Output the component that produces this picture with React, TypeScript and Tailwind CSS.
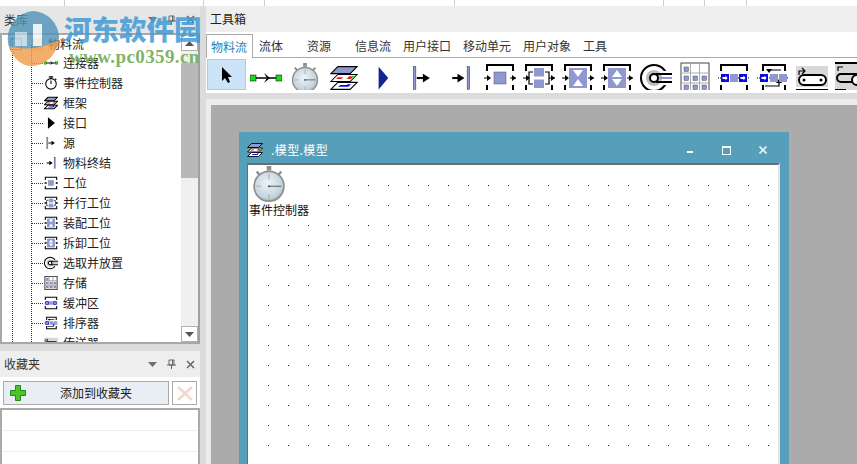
import React from "react";

const font = "font-['Noto_Sans_CJK_SC','Liberation_Sans',sans-serif]";
const LAV = "#8f98cf";

type IconProps = { s: number; sw?: number };

// shared corner frame used by the station-like blocks
const Brackets = ({ sw }: { sw: number }) => (
  <path d="M3 9V3H29V9M3 23V29H29V23" fill="none" stroke="#000" strokeWidth={sw} />
);

const Ports = ({ sw }: { sw: number }) => (
  <g>
    <path d="M0 16H6M26 16H32" stroke="#000" strokeWidth={sw} />
    <path d="M3 13l4 3-4 3zM28 13l4 3-4 3z" fill="#000" />
  </g>
);

const Svg = ({ s, children }: { s: number; children: React.ReactNode }) => (
  <svg width={s} height={s} viewBox="0 0 32 32" className="block shrink-0">
    {children}
  </svg>
);

const Connector = ({ s, sw = 1.5 }: IconProps) => (
  <Svg s={s}>
    <path d="M4 16H28" stroke="#000" strokeWidth={sw} />
    <path d="M14 11l6 5-6 5 3-5z" fill="#000" />
    <rect x="0" y="13" width="6" height="6" fill="#1bd81b" stroke="#000" strokeWidth="0.5" />
    <rect x="26" y="13" width="6" height="6" fill="#1bd81b" stroke="#000" strokeWidth="0.5" />
  </Svg>
);

const Watch = ({ s }: { s: number }) => (
  <svg width={s} height={s} viewBox="0 0 32 32" className="block shrink-0">
    <defs>
      <radialGradient id="watchFace" cx="0.45" cy="0.4" r="0.7">
        <stop offset="0" stopColor="#eef3f6" />
        <stop offset="0.75" stopColor="#c3d2dc" />
        <stop offset="1" stopColor="#8b9aa5" />
      </radialGradient>
    </defs>
    <rect x="14" y="0" width="4" height="4" fill="#8d8d8d" />
    <rect x="15" y="3" width="2" height="3" fill="#a8a8a8" />
    <path d="M5 5l3 3M27 5l-3 3" stroke="#8a8a8a" strokeWidth="2" />
    <circle cx="16" cy="18" r="14" fill="#8f8f8f" />
    <circle cx="16" cy="18" r="12.5" fill="url(#watchFace)" />
    <path d="M16 18H27" stroke="#5d6b78" strokeWidth="1" />
    <path d="M16 7v5M16 25v4M5 18h4" stroke="#9fb0bd" strokeWidth="1" />
    <circle cx="16" cy="18" r="1" fill="#4d5a66" />
  </svg>
);

const SmallWatch = ({ s }: IconProps) => (
  <Svg s={s}>
    <circle cx="16" cy="18" r="12" fill="#fff" stroke="#000" strokeWidth="2.4" />
    <path d="M11 2H21M16 2V6M16 18V10" stroke="#000" strokeWidth="2.4" fill="none" />
    <path d="M25 6l3 3" stroke="#000" strokeWidth="2.4" />
  </Svg>
);

const Frame = ({ s, sw = 1.2 }: IconProps) => (
  <Svg s={s}>
    <path d="M9 3H31L23 11H1Z" fill={LAV} stroke="#000" strokeWidth={sw} />
    <path d="M9 12H31L23 20H1Z" fill="#fff" stroke="#000" strokeWidth={sw} />
    <path d="M7 17h6l2-2H9zM19 17h5l3-3h-5z" fill="#e01818" />
    <path d="M25 13.5h4l-1 1.5h-4z" fill="#1bd81b" />
    <path d="M9 21H31L23 29H1Z" fill="#fff" stroke="#000" strokeWidth={sw} />
    <path d="M9 26h12l3-3h-4l-1 1h-7z" fill="#0a0adf" />
  </Svg>
);

const Interface = ({ s }: IconProps) => (
  <Svg s={s}>
    <path d="M11 3L22 16L11 29Z" fill="#12268f" />
  </Svg>
);

const SmallInterface = ({ s }: IconProps) => (
  <Svg s={s}>
    <path d="M9 3L25 16L9 29Z" fill="#000" />
  </Svg>
);

const Source = ({ s }: IconProps) => (
  <Svg s={s}>
    <rect x="6" y="3" width="3" height="26" fill={LAV} stroke="#222" strokeWidth="0.5" />
    <path d="M10 16H17" stroke="#000" strokeWidth="2.4" />
    <path d="M17 11l8 5-8 5z" fill="#000" />
  </Svg>
);

const Drain = ({ s }: IconProps) => (
  <Svg s={s}>
    <rect x="23" y="3" width="3" height="26" fill={LAV} stroke="#222" strokeWidth="0.5" />
    <path d="M6 16H13" stroke="#000" strokeWidth="2.4" />
    <path d="M12 11l8 5-8 5z" fill="#000" />
  </Svg>
);

const Station = ({ s, sw = 2 }: IconProps) => (
  <Svg s={s}>
    <Brackets sw={sw} />
    <Ports sw={sw * 0.6} />
    <rect x="10" y="10" width="12" height="12" fill={LAV} stroke="#555" strokeWidth="0.5" />
  </Svg>
);

const Parallel = ({ s, sw = 2 }: IconProps) => (
  <Svg s={s}>
    <Brackets sw={sw} />
    <Ports sw={sw * 0.6} />
    <path d="M6 16V10H10M6 16V22H10M26 16V10H22M26 16V22H22" fill="none" stroke="#000" strokeWidth={sw * 0.6} />
    <rect x="11" y="6" width="10" height="8.500" fill={LAV} />
    <rect x="11" y="17.500" width="10" height="8.500" fill={LAV} />
  </Svg>
);

const Assembly = ({ s, sw = 2 }: IconProps) => (
  <Svg s={s}>
    <Brackets sw={sw} />
    <Ports sw={sw * 0.6} />
    <rect x="7" y="6" width="18" height="20" fill={LAV} />
    <path d="M11 8H21L16 15ZM11 24H21L16 17Z" fill="#fff" />
  </Svg>
);

const Dismantle = ({ s, sw = 2 }: IconProps) => (
  <Svg s={s}>
    <Brackets sw={sw} />
    <Ports sw={sw * 0.6} />
    <rect x="7" y="6" width="18" height="20" fill={LAV} />
    <path d="M16 8L21 15H11ZM16 24L21 17H11Z" fill="#fff" />
  </Svg>
);

const PickPlace = ({ s, sw = 2 }: IconProps) => (
  <Svg s={s}>
    <circle cx="14" cy="16" r="13" fill="none" stroke="#000" strokeWidth={sw} />
    <rect x="16" y="9" width="16" height="14" fill="#fff" />
    <circle cx="14" cy="16" r="8" fill="#bdbdbd" />
    <circle cx="14" cy="16" r="4" fill="#fff" stroke="#000" strokeWidth={sw} />
    <path d="M16 12H32M16 20H32" stroke="#000" strokeWidth={sw} />
    <path d="M20 15H32V17H20Z" fill={LAV} />
  </Svg>
);

const Store = ({ s, sw = 1 }: IconProps) => (
  <Svg s={s}>
    <rect x="2" y="1" width="28" height="30" fill="#fff" stroke="#444" strokeWidth={sw} />
    <path d="M11.5 1V31M20.5 1V31M2 11H30M2 21H30" stroke="#aaa" strokeWidth={sw} />
    {[5, 14, 23].map((y) =>
      [5, 14, 23].map((x) =>
        x === 14 && y === 5 ? null : x === 23 && y === 5 ? null : (
          <rect key={`${x}-${y}`} x={x} y={y} width="4.5" height="4.5" fill={LAV} stroke="#334" strokeWidth="0.4" />
        ),
      ),
    )}
  </Svg>
);

const Buffer = ({ s, sw = 2 }: IconProps) => (
  <Svg s={s}>
    <Brackets sw={sw} />
    <path d="M0 16H32" stroke="#000" strokeWidth="1" strokeDasharray="1 1" />
    <rect x="3" y="12" width="8" height="8" fill="#0a0adf" />
    <rect x="12" y="12" width="8" height="8" fill={LAV} />
    <rect x="21" y="12" width="8" height="8" fill="#0a0adf" />
    <path d="M4.5 15h3v-1.5l2 2.500-2 2.500V17h-3zM22.500 15h3v-1.500l2 2.500-2 2.500V17h-3z" fill="#fff" />
  </Svg>
);

const Sorter = ({ s, sw = 2 }: IconProps) => (
  <Svg s={s}>
    <path d="M6 9V3H28V9M6 23V29H28V23" fill="none" stroke="#000" strokeWidth={sw} />
    <path d="M24 8H11M8 24H22V20" fill="none" stroke="#000" strokeWidth={sw * 0.6} />
    <path d="M9 7h6l-3 4zM19 21h6l-3-4z" fill="#000" />
    <path d="M0 16H32" stroke="#000" strokeWidth="1" strokeDasharray="1 1" />
    <rect x="3" y="12" width="8" height="8" fill="#0a0adf" />
    <rect x="13" y="12" width="8" height="8" fill={LAV} />
    <rect x="22" y="12" width="8" height="8" fill={LAV} />
    <path d="M4.500 15h3v-1.500l2 2.500-2 2.500V17h-3z" fill="#fff" />
  </Svg>
);

const Conveyor = ({ s, sw = 2 }: IconProps) => (
  <Svg s={s}>
    <rect x="0" y="4" width="32" height="21" fill="#d8d8d8" />
    <rect x="3" y="13" width="27" height="10" rx="5" fill="#fff" stroke="#000" strokeWidth={sw} />
    <circle cx="8" cy="18" r="1.500" fill="#000" />
    <circle cx="25" cy="18" r="1.500" fill="#000" />
    <path d="M3 13V9H8M6 6l3 3-3 3" fill="none" stroke="#000" strokeWidth={sw * 0.6} />
    <path d="M0 28H32" stroke="#000" strokeWidth={sw} />
  </Svg>
);

const Track = ({ s, sw = 2 }: IconProps) => (
  <Svg s={s}>
    <rect x="0" y="0" width="32" height="32" fill="#d8d8d8" />
    <path d="M0 1H32" stroke="#000" strokeWidth={sw} />
    <path d="M6 12H28M6 20H18" fill="none" stroke="#000" strokeWidth={sw} />
    <path d="M6 12a4 4 0 0 0 0 8" fill="none" stroke="#000" strokeWidth={sw} />
    <circle cx="22" cy="18" r="5" fill="#fff" stroke="#000" strokeWidth={sw} />
    <path d="M3 9V5H8" fill="none" stroke="#000" strokeWidth={sw * 0.6} />
    <path d="M0 28H10V32" fill="none" stroke="#000" strokeWidth={sw} />
  </Svg>
);

const treeRows: { label: string; Icon: React.ComponentType<IconProps> }[] = [
  { label: "连接器", Icon: Connector },
  { label: "事件控制器", Icon: SmallWatch },
  { label: "框架", Icon: Frame },
  { label: "接口", Icon: SmallInterface },
  { label: "源", Icon: Source },
  { label: "物料终结", Icon: Drain },
  { label: "工位", Icon: Station },
  { label: "并行工位", Icon: Parallel },
  { label: "装配工位", Icon: Assembly },
  { label: "拆卸工位", Icon: Dismantle },
  { label: "选取并放置", Icon: PickPlace },
  { label: "存储", Icon: Store },
  { label: "缓冲区", Icon: Buffer },
  { label: "排序器", Icon: Sorter },
  { label: "传送器", Icon: Conveyor },
];

const tabs = [
  { label: "物料流", w: "w-[47px] pl-[4px]" },
  { label: "流体", w: "w-[48px] pl-[6px]" },
  { label: "资源", w: "w-[48px] pl-[6px]" },
  { label: "信息流", w: "w-[48px] pl-[6px]" },
  { label: "用户接口", w: "w-[60px] pl-[6px]" },
  { label: "移动单元", w: "w-[60px] pl-[6px]" },
  { label: "用户对象", w: "w-[60px] pl-[6px]" },
  { label: "工具", w: "w-[36px] pl-[6px]" },
];

const toolIcons: React.ReactNode[] = [
  <Connector s={32} />,
  <Watch s={30} />,
  <Frame s={28} />,
  <Interface s={28} />,
  <Source s={28} />,
  <Drain s={28} />,
  <Station s={32} />,
  <Parallel s={32} />,
  <Assembly s={32} />,
  <Dismantle s={32} />,
  <PickPlace s={32} />,
  <Store s={32} />,
  <Buffer s={32} />,
  <Sorter s={32} />,
  <Conveyor s={32} />,
  <Track s={32} />,
];

const ticks = ["w-[65px]", "w-[139px]", "w-[61px]", "w-[190px]", "w-[209px]", "w-[41px]", "w-[42px]"];

const PanelControls = () => (
  <div className="ml-auto flex items-center gap-[10px] pr-[5px]">
    <svg width="9" height="5" viewBox="0 0 9 5">
      <path d="M0 0H9L4.500 5Z" fill="#6e6e6e" />
    </svg>
    <svg width="9" height="10" viewBox="0 0 9 10">
      <path d="M2 1H7V6H2ZM0 6H9M4.500 6V10M5.500 1V6" fill="none" stroke="#666" />
    </svg>
    <svg width="9" height="9" viewBox="0 0 9 9">
      <path d="M1 1L8 8M8 1L1 8" stroke="#666" strokeWidth="1.500" />
    </svg>
  </div>
);

const ScrollArrow = ({ down }: { down?: boolean }) => (
  <div className="flex h-[16px] w-[17px] shrink-0 items-center justify-center border border-[#b0b0b0] bg-white">
    <svg width="9" height="5" viewBox="0 0 9 5">
      <path d={down ? "M0 0H9L4.500 5Z" : "M0 5H9L4.500 0Z"} fill="#555" />
    </svg>
  </div>
);

const TreePanel = () => (
  <div className="relative h-[311px] overflow-hidden border-2 border-[#a8a8a8] border-r-[#a0a0a0] bg-white">
    <div className="flex h-full">
      <div className="relative min-w-0 flex-1 overflow-hidden">
        {/* dotted connector lines */}
        <div className="absolute left-[10px] top-[4px] h-full border-l border-dotted border-[#333]" />
        <div className="absolute left-[29px] top-[10px] h-full border-l border-dotted border-[#333]" />
        <div className="flex h-[18px] items-center pl-[8px]">
          <div className="mr-[9px] h-[12px] w-[12px] border border-[#999] bg-white" />
          <div className="mr-[5px] h-[13px] w-[12px] bg-[#f3d9a6]" />
          <span className={`${font} text-[12px] leading-none text-[#222]`}>物料流</span>
        </div>
        {treeRows.map(({ label, Icon }) => (
          <div key={label} className="flex h-[20px] items-center pl-[30px]">
            <div className="mr-[1px] w-[11px] border-t border-dotted border-[#333]" />
            <div className="mr-[5px] flex w-[14px] items-center justify-center">
              <Icon s={14} sw={2.4} />
            </div>
            <span className={`${font} whitespace-nowrap text-[12px] leading-none text-[#222]`}>{label}</span>
          </div>
        ))}
      </div>
      <div className="flex w-[17px] shrink-0 flex-col bg-[#f0f0f0]">
        <ScrollArrow />
        <div className="h-[12px] shrink-0" />
        <div className="h-[115px] shrink-0 bg-[#b8b8b8]" />
        <div className="flex-1" />
        <ScrollArrow down />
      </div>
    </div>
  </div>
);

const FavoritesPanel = () => (
  <div className="flex flex-1 flex-col overflow-hidden bg-[#eeeeee]">
    <div className="flex h-[26px] shrink-0 items-center pl-[4px]">
      <span className={`${font} text-[12px] leading-none text-[#333]`}>收藏夹</span>
      <PanelControls />
    </div>
    <div className="h-[1px] shrink-0 bg-white" />
    <div className="flex h-[30px] shrink-0 items-center gap-[3px] bg-white pl-[3px]">
      <div className="relative flex h-[24px] w-[166px] items-center justify-center border border-[#aaaaaa] bg-[#e8eef4]">
        <svg width="16" height="16" viewBox="0 0 16 16" className="absolute left-[6px] top-[3px]">
          <path d="M5.500 .5H10.500V5.500H15.500V10.500H10.500V15.500H5.500V10.500H.5V5.500H5.500Z" fill="#4fc22c" stroke="#1d8a12" />
        </svg>
        <span className={`${font} pl-[20px] text-[12px] leading-none text-[#222]`}>添加到收藏夹</span>
      </div>
      <div className="flex h-[24px] w-[25px] items-center justify-center border border-[#aaaaaa] bg-white">
        <svg width="16" height="15" viewBox="0 0 16 15">
          <path d="M1 1L15 14M15 1L1 14" stroke="#f4d6d0" strokeWidth="2.500" />
        </svg>
      </div>
    </div>
    <div className="flex-1 border-x-2 border-t-2 border-[#aaaaaa] bg-white px-[1px]">
      <div className="h-[21px] border-b border-[#eeeeee]" />
      <div className="h-[21px] border-b border-[#eeeeee]" />
    </div>
  </div>
);

const ModelWindow = () => (
  <div className="ml-[28px] mt-[27px] flex h-[360px] w-[550px] flex-col bg-[#569fba] pl-[8px]">
    <div className="flex h-[31px] shrink-0 items-center pt-[5px]">
      <Frame s={16} sw={1.800} />
      <span className={`${font} ml-[8px] text-[12px] leading-none tracking-[0.4px] text-white`}>.模型.模型</span>
      <div className="ml-auto flex items-center">
        <div className="mr-[29px] mt-[4px] h-[2px] w-[6px] bg-white" />
        <div className="mr-[28px] h-[9px] w-[9px] border border-t-2 border-white" />
        <svg width="8" height="8" viewBox="0 0 8 8" className="mr-[22px]">
          <path d="M.5 .5L7.500 7.500M7.500 .5L.5 7.500" stroke="#e8f2f6" strokeWidth="1.600" />
        </svg>
      </div>
    </div>
    <div className="relative min-h-0 w-[533px] flex-1 border-l border-r-2 border-t-2 border-l-[#6e6e6e] border-r-[#e4e4e4] border-t-[#6e6e6e] bg-white">
      {/* grid of snap points on the frame canvas */}
      <svg className="absolute bottom-0 left-[20px] right-0 top-[20px] h-[calc(100%-20px)] w-[calc(100%-20px)]">
        <defs>
          <pattern id="snapGrid" width="20" height="20" patternUnits="userSpaceOnUse">
            <rect x="0" y="0" width="1" height="1" fill="#222" />
          </pattern>
        </defs>
        <rect width="100%" height="100%" fill="url(#snapGrid)" />
      </svg>
      <div className="absolute left-[1px] top-[1px] flex flex-col items-start bg-white">
        <div className="ml-[2px]">
          <Watch s={36} />
        </div>
        <span className={`${font} text-[12px] leading-[16px] text-[#111]`}>事件控制器</span>
      </div>
    </div>
  </div>
);

const Watermark = () => (
  <div className="pointer-events-none absolute left-0 top-[10px] h-[60px] w-[205px]">
    <svg width="62" height="58" viewBox="0 0 62 58" className="absolute left-[3px] top-0 opacity-80">
      <path d="M30 1a27 27 0 0 1 26 26c0 6-2 11-5 15H8A28 28 0 0 1 30 1Z" fill="#4f93b8" />
      <path d="M6 36c12 4 30 4 50-6-3 16-14 26-28 26C18 56 9 47 6 36Z" fill="#ef9b45" />
      <path d="M30 14h9v22h-9z" fill="#fff" opacity="0.9" />
      <path d="M12 22h12v14H12z" fill="#fff" opacity="0.6" />
    </svg>
    <span className="absolute left-[64px] top-[0px] whitespace-nowrap font-['Noto_Sans_CJK_SC',serif] text-[27.500px] font-black leading-[36px] text-[#3f9ad6]/85">
      河东软件园
    </span>
    <span className="absolute left-[69px] top-[37px] whitespace-nowrap font-['Liberation_Serif',serif] text-[19px] font-bold leading-[20px] tracking-[0.4px] text-[#6cab55]/90">
      www.pc0359.cn
    </span>
  </div>
);

export default function App() {
  return (
    <div className="relative flex h-[464px] w-[857px] flex-col overflow-hidden bg-[#dcdcdc]">
      <div className="flex h-[6px] shrink-0 bg-white">
        {ticks.map((w) => (
          <div key={w} className={`${w} h-full border-r border-[#cccccc]`} />
        ))}
      </div>
      <div className="flex min-h-0 flex-1">
        {/* left dock */}
        <div className="flex w-[200px] shrink-0 flex-col">
          <div className="flex h-[27px] shrink-0 items-center bg-[#e6e6e6] pl-[4px]">
            <span className={`${font} text-[12px] leading-none text-[#333]`}>类库</span>
            <PanelControls />
          </div>
          <TreePanel />
          <div className="h-[7px] shrink-0" />
          <FavoritesPanel />
        </div>
        {/* right dock */}
        <div className="ml-[6px] flex min-w-0 flex-1 flex-col">
          <div className="flex h-[26px] shrink-0 items-center bg-[#eeeeee] pl-[4px]">
            <span className={`${font} text-[12px] leading-none text-[#222]`}>工具箱</span>
          </div>
          <div className="flex h-[26px] shrink-0 items-end border-b border-[#aaaaaa] bg-white">
            {tabs.map((tab, i) => (
              <div
                key={tab.label}
                className={`${tab.w} flex h-[23px] items-center ${font} text-[12px] leading-none ${
                  i === 0 ? "-mb-px h-[24px] border border-b-0 border-[#aaaaaa] bg-white text-[#1f7fb8]" : "text-[#333]"
                }`}
              >
                {tab.label}
              </div>
            ))}
          </div>
          <div className="flex h-[35px] shrink-0 items-start overflow-hidden bg-white pl-[1px] pt-[1px]">
            <div className="flex h-[31px] w-[39px] shrink-0 items-center justify-center border border-[#a3cdea] bg-[#cce4f7]">
              <svg width="12" height="16" viewBox="0 0 12 16">
                <path d="M1 0V14L4 11L7 16L9 15L7 10H11Z" fill="#000" />
              </svg>
            </div>
            {toolIcons.map((icon, i) => (
              <div key={i} className="flex h-[31px] w-[39px] shrink-0 items-center justify-center overflow-hidden pt-[6px]">
                {icon}
              </div>
            ))}
          </div>
          <div className="h-[6px] shrink-0 bg-[#dcdcdc]" />
          <div className="min-h-0 flex-1 overflow-hidden border-l-[5px] border-t-[6px] border-[#ececec] bg-[#ababab]">
            <ModelWindow />
          </div>
        </div>
      </div>
      <Watermark />
    </div>
  );
}
